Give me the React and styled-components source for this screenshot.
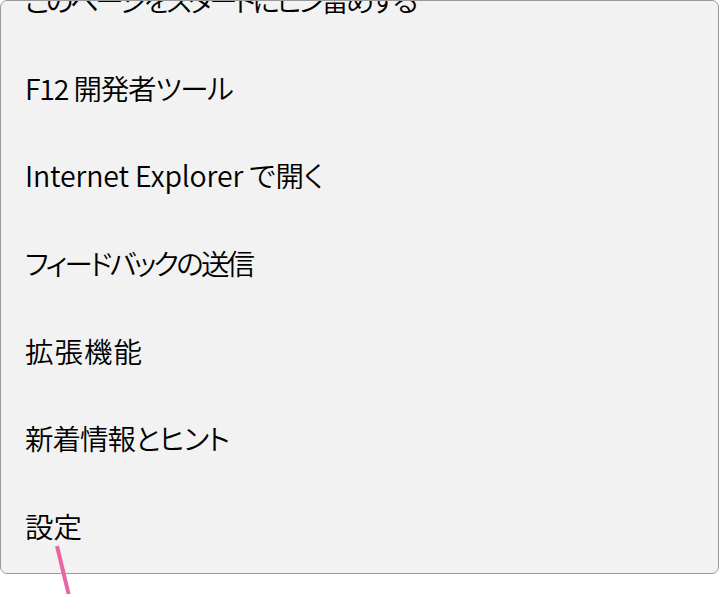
import React from 'react'
import styled, { createGlobalStyle } from 'styled-components';

const items = [
  { label: 'このページをスタートにピン留めする', spacing: -3.6 },
  { label: 'F12 開発者ツール', spacing: -1.2 },
  { label: 'Internet Explorer で開く', spacing: -0.15 },
  { label: 'フィードバックの送信', spacing: -2.8 },
  { label: '拡張機能', spacing: 1 },
  { label: '新着情報とヒント', spacing: -1 },
  { label: '設定', spacing: 0 },
];

const App = () => {
  return (
    <>
      <GlobalStyle />
      <Stage>
        <Menu>
          <List>
            {items.map(item => (
              <Item key={item.label} $spacing={item.spacing}>{item.label}</Item>
            ))}
          </List>
        </Menu>
        <Pointer width="40" height="60" viewBox="0 0 40 60">
          <line x1="8" y1="2" x2="22" y2="60" stroke="#ea65a6" strokeWidth="4" />
        </Pointer>
      </Stage>
    </>
  )
}

export default App;

const GlobalStyle = createGlobalStyle`
  html, body {
    margin: 0;
    background: #ffffff;
  }
`;

const Stage = styled.div`
  position: relative;
  width: 720px;
  height: 594px;
  overflow: hidden;
`;

const Menu = styled.div`
  width: 717px;
  height: 572px;
  background: #f2f2f2;
  border: 1px solid #9a9a9a;
  border-radius: 7px;
  overflow: hidden;
`;

const List = styled.ul`
  list-style: none;
  margin: -45px 0 0;
  padding: 0;
`;

const Item = styled.li`
  height: 87.6px;
  display: flex;
  align-items: center;
  padding-left: 24px;
  font-family: "Noto Sans CJK JP", "Noto Sans", sans-serif;
  font-size: 28.5px;
  font-weight: 350;
  font-feature-settings: "palt";
  letter-spacing: ${p => p.$spacing}px;
  color: #000000;
  white-space: nowrap;
`;

const Pointer = styled.svg`
  position: absolute;
  left: 49px;
  top: 544px;
`;
